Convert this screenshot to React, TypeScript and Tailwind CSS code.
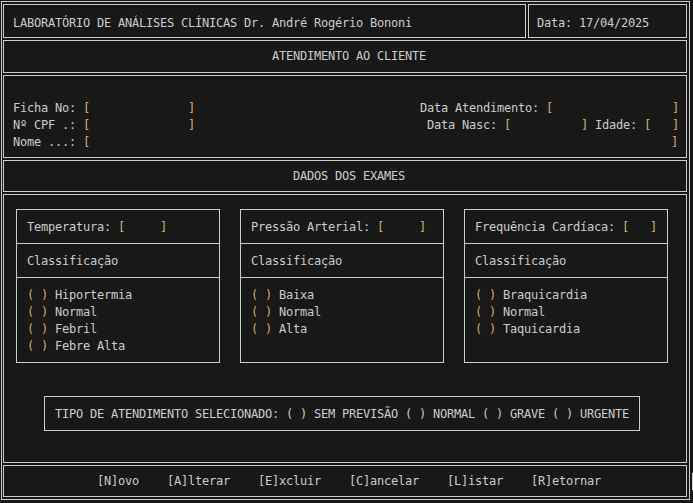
import React from "react";

const Y = ({ children }: { children: React.ReactNode }) => (
  <span className="text-[#d4ab6c]">{children}</span>
);

const Field = ({ n }: { n: number }) => (
  <>
    <Y>[</Y>
    {" ".repeat(n)}
    <Y>]</Y>
  </>
);

const Radio = ({ label }: { label: string }) => (
  <div>
    <Y>(</Y>
    {" "}
    <Y>)</Y>
    {" " + label}
  </div>
);

const ExamBox = ({
  label,
  n,
  options,
}: {
  label: string;
  n: number;
  options: string[];
}) => (
  <div className="w-[204px] h-[154px] border border-[#cccccc] flex flex-col">
    <div className="border-b border-[#cccccc] pl-[10px] pt-[9px] pb-[7px]">
      {label}
      <Field n={n} />
    </div>
    <div className="border-b border-[#cccccc] pl-[10px] pt-[9px] pb-[7px]">
      Classificação
    </div>
    <div className="flex-1 pl-[10px] pt-[9px]">
      {options.map((o) => (
        <Radio key={o} label={o} />
      ))}
    </div>
  </div>
);

export default function App() {
  return (
    <div className="relative w-[693px] h-[503px] bg-[#181818] text-[#cccccc] font-['DejaVu_Sans_Mono',monospace] text-[12px] tracking-[-0.225px] leading-[17px] whitespace-pre overflow-hidden">
      <div className="ml-[1px] pt-[1px]">
        <div className="w-[689px] h-[499px] border border-[#cccccc] pt-[2px] pl-[1px] pr-[2px] pb-[2px] flex flex-col gap-[2px]">
          {/* header */}
          <div className="flex gap-[2px] h-[34px]">
            <div className="w-[523px] border border-[#cccccc] pl-[9px] pt-[10px]">
              LABORATÓRIO DE ANÁLISES CLÍNICAS Dr. André Rogério Bononi
            </div>
            <div className="flex-1 border border-[#cccccc] pl-[8px] pt-[10px]">
              Data: 17/04/2025
            </div>
          </div>

          {/* title */}
          <div className="h-[33px] border border-[#cccccc] text-center pl-[8px] pt-[7px]">
            ATENDIMENTO AO CLIENTE
          </div>

          {/* client fields */}
          <div className="h-[83px] border border-[#cccccc] pl-[9px] pr-[7px] pt-[24px]">
            <div className="flex justify-between">
              <span>
                Ficha No: <Field n={14} />
              </span>
              <span>
                Data Atendimento: <Field n={17} />
              </span>
            </div>
            <div className="flex justify-between">
              <span>
                Nº CPF .: <Field n={14} />
              </span>
              <span>
                Data Nasc: <Field n={10} /> Idade: <Field n={3} />
              </span>
            </div>
            <div>
              Nome ...: <Field n={83} />
            </div>
          </div>

          {/* section title */}
          <div className="h-[32px] border border-[#cccccc] text-center pl-[8px] pt-[7px]">
            DADOS DOS EXAMES
          </div>

          {/* exams */}
          <div className="h-[269px] border border-[#cccccc] pt-[14px] pl-[12px] flex flex-col items-start">
            <div className="flex gap-[20px]">
              <ExamBox
                label="Temperatura: "
                n={5}
                options={["Hiportermia", "Normal", "Febril", "Febre Alta"]}
              />
              <ExamBox
                label="Pressão Arterial: "
                n={5}
                options={["Baixa", "Normal", "Alta"]}
              />
              <ExamBox
                label="Frequência Cardíaca: "
                n={3}
                options={["Braquicardia", "Normal", "Taquicardia"]}
              />
            </div>
            <div className="mt-[33px] ml-[28px] border border-[#cccccc] px-[10px] pt-[9px] pb-[7px]">
              TIPO DE ATENDIMENTO SELECIONADO: ( ) SEM PREVISÃO ( ) NORMAL ( ) GRAVE ( ) URGENTE
            </div>
          </div>

          {/* footer */}
          <div className="h-[32px] border border-[#cccccc] pl-[93px] pt-[7px]">
            {"[N]ovo    [A]lterar    [E]xcluir    [C]ancelar    [L]istar    [R]etornar"}
          </div>
        </div>
      </div>
      <div className="absolute right-0 top-[473px] w-[1px] h-[17px] bg-[#d0d0d0]" />
    </div>
  );
}
